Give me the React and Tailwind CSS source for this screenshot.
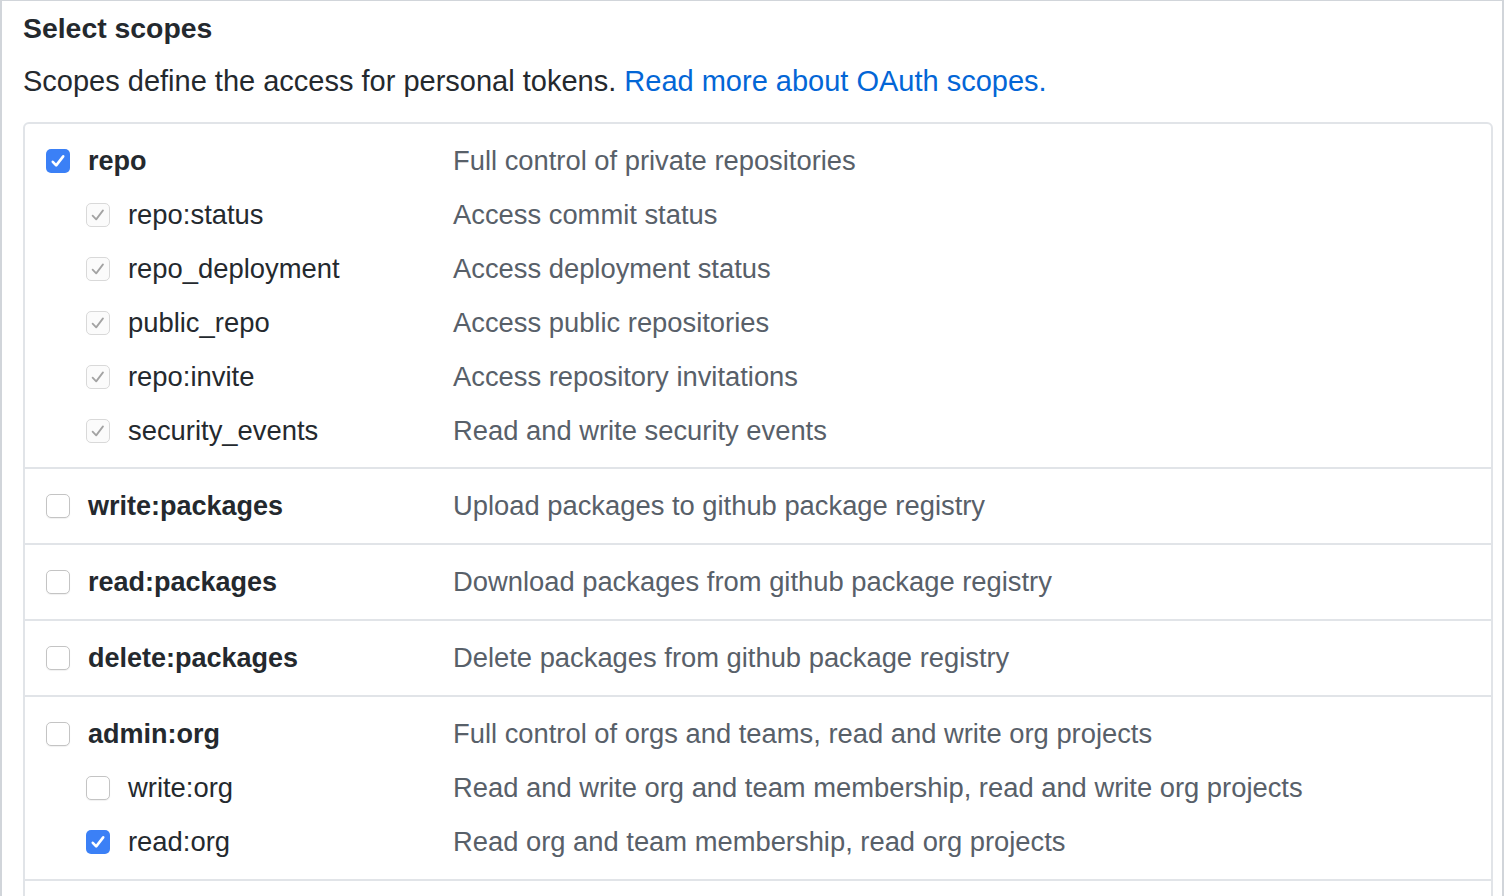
import React from 'react';

const groups = [
  {
    name: 'repo',
    desc: 'Full control of private repositories',
    state: 'checked',
    children: [
      { name: 'repo:status', desc: 'Access commit status', state: 'implied' },
      { name: 'repo_deployment', desc: 'Access deployment status', state: 'implied' },
      { name: 'public_repo', desc: 'Access public repositories', state: 'implied' },
      { name: 'repo:invite', desc: 'Access repository invitations', state: 'implied' },
      { name: 'security_events', desc: 'Read and write security events', state: 'implied' },
    ],
  },
  { name: 'write:packages', desc: 'Upload packages to github package registry', state: 'off', children: [] },
  { name: 'read:packages', desc: 'Download packages from github package registry', state: 'off', children: [] },
  { name: 'delete:packages', desc: 'Delete packages from github package registry', state: 'off', children: [] },
  {
    name: 'admin:org',
    desc: 'Full control of orgs and teams, read and write org projects',
    state: 'off',
    children: [
      { name: 'write:org', desc: 'Read and write org and team membership, read and write org projects', state: 'off' },
      { name: 'read:org', desc: 'Read org and team membership, read org projects', state: 'checked' },
    ],
  },
];

function Checkbox({ state }) {
  if (state === 'checked') {
    return (
      <span className="w-[24px] h-[24px] rounded-[5px] bg-[#3b80f6] flex items-center justify-center flex-shrink-0">
        <svg width="24" height="24" viewBox="0 0 24 24" fill="none">
          <path d="M6.8 12.8 L10.2 16.4 L17.2 7.4" stroke="#fff" strokeWidth="2.6" strokeLinecap="round" strokeLinejoin="round" />
        </svg>
      </span>
    );
  }
  if (state === 'implied') {
    return (
      <span className="w-[24px] h-[24px] rounded-[5px] border border-[#d9d9d9] bg-[#fbfbfb] flex items-center justify-center flex-shrink-0">
        <svg width="22" height="22" viewBox="0 0 22 22" fill="none">
          <path d="M5.6 11.6 L9.2 15.4 L16 6.4" stroke="#a3a3a3" strokeWidth="1.8" strokeLinecap="round" strokeLinejoin="round" />
        </svg>
      </span>
    );
  }
  return (
    <span className="w-[24px] h-[24px] rounded-[5px] border border-[#c4c4c4] bg-white shadow-[0_1px_1px_rgba(0,0,0,0.06)] flex-shrink-0" />
  );
}

function ScopeRow({ item, child }) {
  return (
    <div className="flex items-center h-[54px]">
      <div className={`w-[407px] flex items-center gap-[18px] flex-shrink-0 ${child ? 'pl-[40px]' : ''}`}>
        <Checkbox state={item.state} />
        <span className={`text-[#24292e] whitespace-nowrap ${child ? 'text-[27.4px] font-normal' : 'text-[27px] font-bold'}`}>{item.name}</span>
      </div>
      <span className="text-[27.35px] text-[#586069] whitespace-nowrap">{item.desc}</span>
    </div>
  );
}

export default function App() {
  return (
    <div
      className="w-[1504px] h-[896px] overflow-hidden bg-white border-l-2 border-t border-r-2 border-[#d1d5da] pl-[21px] pr-[9px] pt-[10px]"
      style={{ fontFamily: '"Liberation Sans", Arial, sans-serif' }}
    >
      <h3 className="text-[28.4px] font-bold text-[#24292e] leading-[34px] h-[34px]">Select scopes</h3>
      <p className="mt-[16px] text-[29px] leading-[40px] text-[#24292e] whitespace-nowrap">
        Scopes define the access for personal tokens.{' '}
        <a href="#" className="text-[#0366d6]">Read more about OAuth scopes.</a>
      </p>

      <div className="mt-[21px] border-2 border-[#e1e4e8] rounded-[6px]">
        {groups.map((g, i) => (
          <div
            key={g.name}
            className={`px-[21px] pt-[10px] ${i === 0 ? 'pb-[9px]' : 'pb-[10px] border-t-2 border-[#e1e4e8]'}`}
          >
            <ScopeRow item={g} />
            {g.children.map((c) => (
              <ScopeRow key={c.name} item={c} child />
            ))}
          </div>
        ))}
        <div className="h-[74px] border-t-2 border-[#e1e4e8]" />
      </div>
    </div>
  );
}
